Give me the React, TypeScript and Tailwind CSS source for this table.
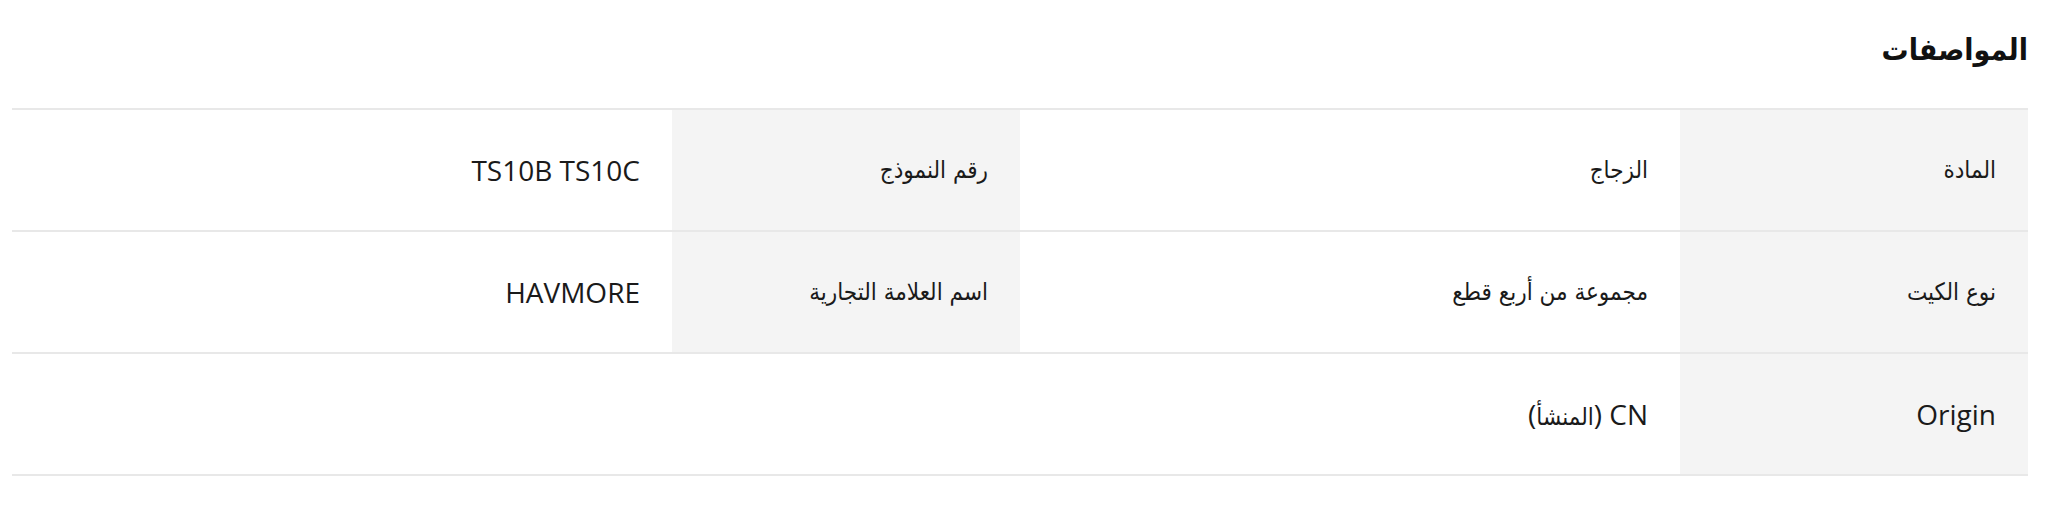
import React from "react";

const font = { fontFamily: '"Open Sans", "DejaVu Sans", sans-serif' };

function Ar({ children, bold }: { children: React.ReactNode; bold?: boolean }) {
  return (
    <span
      className={
        bold
          ? "font-['DejaVu_Sans_Condensed','DejaVu_Sans',sans-serif] font-bold"
          : "font-['DejaVu_Sans_Condensed','DejaVu_Sans',sans-serif] text-[24px]"
      }
    >
      {children}
    </span>
  );
}

function Label({ children }: { children: React.ReactNode }) {
  return (
    <div className="w-[348px] shrink-0 bg-[#f4f4f4] flex items-center px-8 text-[28px] text-[#1a1a1a]">
      {children}
    </div>
  );
}

function Value({ children, wide }: { children: React.ReactNode; wide?: boolean }) {
  return (
    <div
      className={
        (wide ? "w-[1668px]" : "w-[660px]") +
        " shrink-0 bg-white flex items-center px-8 text-[28px] text-[#1a1a1a]"
      }
    >
      {children}
    </div>
  );
}

export default function App() {
  return (
    <div dir="rtl" className="bg-white w-[2058px] h-[522px] pr-[30px] pl-[12px]" style={font}>
      <div className="h-[108px] pt-[29px]">
        <h2 className="text-[30px] leading-[40px] font-bold text-[#111]">
          <Ar bold>المواصفات</Ar>
        </h2>
      </div>
      <div className="border-t-2 border-[#e8e8e8]">
        <div className="flex h-[122px] border-b-2 border-[#e8e8e8]">
          <Label><Ar>المادة</Ar></Label>
          <Value><Ar>الزجاج</Ar></Value>
          <Label><Ar>رقم النموذج</Ar></Label>
          <Value>TS10B TS10C</Value>
        </div>
        <div className="flex h-[122px] border-b-2 border-[#e8e8e8]">
          <Label><Ar>نوع الكيت</Ar></Label>
          <Value><Ar>مجموعة من أربع قطع</Ar></Value>
          <Label><Ar>اسم العلامة التجارية</Ar></Label>
          <Value>HAVMORE</Value>
        </div>
        <div className="flex h-[122px] border-b-2 border-[#e8e8e8]">
          <Label>Origin</Label>
          <Value wide>
            <span>CN (<Ar>المنشأ</Ar>)</span>
          </Value>
        </div>
      </div>
    </div>
  );
}
